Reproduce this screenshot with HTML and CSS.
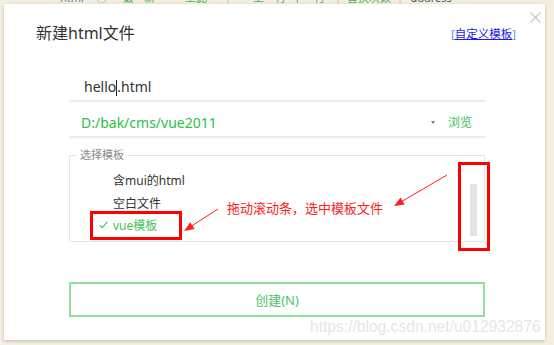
FILE: index.html
```html
<!DOCTYPE html>
<html>
<head>
<meta charset="utf-8">
<link rel="stylesheet" href="styles.css">
</head>
<body>
<div class="topstrip">
  <span class="t g1">html</span><span class="t g2">○</span><span class="t g3">最</span><span class="t g4">新</span><span class="t g5">上此</span><span class="t sep g6">|</span><span class="t g7">上一行</span><span class="t g8">下一行</span><span class="t sep g9">|</span><span class="t g10">替换次数</span><span class="t sep g11">|</span><span class="t dark g12">address</span><span class="t g13">替换</span>
</div>
<div class="stage">
  <div class="dialog">
    <span class="close"><svg width="11" height="11" viewBox="0 0 11 11"><path d="M0.5 0.5 L10.5 10.5 M10.5 0.5 L0.5 10.5" stroke="#c9c9c9" stroke-width="1.2" fill="none"/></svg></span>
    <div class="head">
      <h1 class="title">新建html文件</h1>
      <a class="custom"><span class="br">[</span>自定义模板<span class="br">]</span></a>
    </div>
    <div class="form">
      <div class="row name">hello<span class="caret"></span>.html</div>
      <div class="row path">
        <span class="pathtext">D:/bak/cms/vue2011</span>
        <span class="tri"></span>
        <span class="browse">浏览</span>
      </div>
      <div class="group">
        <span class="legend">选择模板</span>
        <div class="group-body">
          <ul class="list">
            <li>含mui的html</li>
            <li>空白文件</li>
            <li class="sel"><svg class="check" width="9" height="8" viewBox="0 0 9 8"><path d="M0.8 4.2 L3.3 6.6 L8.3 0.8" stroke="#4cc46a" stroke-width="1.2" fill="none"/></svg>vue模板</li>
          </ul>
          <div class="track"><div class="thumb"></div></div>
        </div>
      </div>
      <div class="create">创建(N)</div>
    </div>
    <div class="watermark">https://blog.csdn.net/u012932876</div>
  </div>
</div>
<svg class="annot" width="554" height="345" viewBox="0 0 554 345">
  <rect x="91.5" y="212.5" width="89" height="26" fill="none" stroke="#ff0000" stroke-width="3"/>
  <rect x="459.5" y="163.5" width="29" height="86" fill="none" stroke="#ff0000" stroke-width="3"/>
  <line x1="218" y1="209" x2="190" y2="227" stroke="#ff2020" stroke-width="1"/>
  <polygon points="184,231 194.6,229 190.2,222.2" fill="#ff2020"/>
  <line x1="447" y1="175" x2="400" y2="202.5" stroke="#ff2020" stroke-width="1"/>
  <polygon points="394,206 404.6,204.4 400.6,197.5" fill="#ff2020"/>
</svg>
<div class="note">拖动滚动条，选中模板文件</div>
</body>
</html>
```
FILE: styles.css
```css
html, body {
  margin: 0;
  padding: 0;
}
body {
  width: 554px;
  height: 345px;
  overflow: hidden;
  background: #f3eee0;
  position: relative;
  font-family: "Noto Sans", "Noto Sans CJK SC", sans-serif;
}
.topstrip {
  height: 4px;
  overflow: hidden;
  position: relative;
  display: flex;
}
.topstrip .t {
  display: block;
  font-size: 11px;
  line-height: 11px;
  margin-top: -8px;
  color: #49b35a;
  white-space: nowrap;
}
.topstrip .sep { color: #c8c2a8; }
.topstrip .dark { color: #555; }
.g1 { margin-left: 60px; color: #6b7f9a !important; }
.g2 { margin-left: 12px; color: #999 !important; }
.g3 { margin-left: 16px; }
.g4 { margin-left: 10px; }
.g5 { margin-left: 30px; }
.g6 { margin-left: 18px; }
.g7 { margin-left: 22px; }
.g8 { margin-left: 6px; }
.g9 { margin-left: 10px; }
.g10 { margin-left: 6px; }
.g11 { margin-left: 6px; }
.g12 { margin-left: 8px; }
.g13 { margin-left: 128px; }

.stage {
  display: flex;
  padding-left: 4px;
}
.dialog {
  position: relative;
  width: 541px;
  height: 336px;
  background: #fff;
  box-shadow: 0 1px 3px rgba(0, 0, 0, 0.22);
}
.close {
  position: absolute;
  left: 526px;
  top: 8px;
  width: 11px;
  height: 11px;
  display: block;
}
.close svg { display: block; }
.head {
  display: flex;
  align-items: center;
  justify-content: space-between;
  padding: 18px 29px 0 32px;
  height: 22px;
}
.title {
  margin: 0;
  font-size: 16px;
  font-weight: normal;
  line-height: 22px;
  color: #333;
}
.custom {
  font-size: 11.5px;
  line-height: 16px;
  color: #1a1aee;
  text-decoration: underline;
  margin-top: 2px;
}
.custom .br { color: #5b9bd5; }

.form {
  margin: 24px 0 0 65px;
  width: 416px;
}
.row {
  display: flex;
  align-items: center;
  border-bottom: 2px solid #ececec;
}
.name {
  padding: 4px 0 0 15px;
  height: 28px;
  font-size: 14px;
  color: #333;
}
.caret {
  display: inline-block;
  width: 1px;
  height: 16px;
  background: #222;
  margin-top: 4px;
}
.path {
  padding: 6px 13px 0 12px;
  height: 28px;
  font-size: 14px;
}
.pathtext {
  color: #2cbf45;
  flex: 1;
}
.tri {
  width: 0;
  height: 0;
  border-left: 2.5px solid transparent;
  border-right: 2.5px solid transparent;
  border-top: 3px solid #4a8f55;
  margin-right: 13px;
}
.browse {
  font-size: 12px;
  color: #3cc25a;
}
.group {
  position: relative;
  margin-top: 17px;
  height: 85px;
  border: 1px solid #e6e6e6;
}
.legend {
  position: absolute;
  left: 7px;
  top: -8px;
  padding: 0 3px;
  background: #fff;
  font-size: 11px;
  line-height: 14px;
  color: #8a8a8a;
}
.group-body {
  display: flex;
  height: 100%;
}
.list {
  list-style: none;
  margin: 0;
  padding: 14px 0 0 43px;
  flex: 1;
  font-size: 12px;
  color: #333;
}
.list li {
  line-height: 22.5px;
  height: 22.5px;
  position: relative;
}
.list li.sel { color: #44c260; }
.check {
  position: absolute;
  left: -14px;
  top: 6px;
}
.track {
  width: 7px;
  margin-right: 7px;
  padding-top: 28px;
}
.thumb {
  width: 7px;
  height: 52px;
  background: #e4e4e4;
}
.create {
  margin-top: 40px;
  height: 31px;
  border: 2px solid #8ee09c;
  display: flex;
  align-items: center;
  justify-content: center;
  font-size: 13px;
  color: #4cc266;
}
.watermark {
  position: absolute;
  left: 306px;
  top: 313px;
  font-family: "Liberation Sans", Arial, sans-serif;
  font-size: 15.6px;
  line-height: 20px;
  color: rgba(190, 190, 190, 0.4);
  white-space: nowrap;
}
.annot {
  position: absolute;
  left: 0;
  top: 0;
  pointer-events: none;
}
.note {
  position: absolute;
  left: 227px;
  top: 199px;
  font-size: 13px;
  line-height: 18px;
  color: #ff2020;
  white-space: nowrap;
  font-family: "Noto Sans CJK SC", sans-serif;
}
```
